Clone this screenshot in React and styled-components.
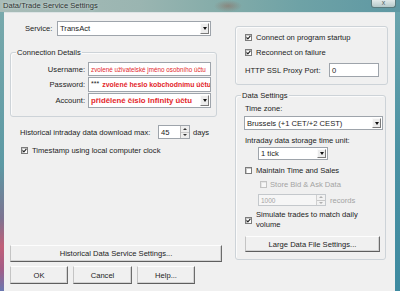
import React from 'react';
import styled, { createGlobalStyle } from 'styled-components';

const GlobalStyle = createGlobalStyle`
  html, body { margin: 0; padding: 0; background: #5f9aa4; }
  body { font-family: "Liberation Sans", Arial, sans-serif; overflow: hidden; }
  * { box-sizing: border-box; }
`;

const Window = styled.div`
  width: 400px;
  height: 291px;
  display: flex;
  flex-direction: column;
  overflow: hidden;
  background: #5f9aa4;
`;

const TitleBar = styled.div`
  height: 12px;
  flex: none;
  display: flex;
  align-items: flex-start;
  justify-content: space-between;
  padding: 0 3px 0 3px;
  background:
    radial-gradient(ellipse 14px 6px at 228px 6px, rgba(150, 70, 50, 0.35), transparent),
    linear-gradient(90deg, #a8bcb8 0%, #9ab5b1 35%, #84aca9 55%, #6ea2a6 75%, #5e98a3 100%);
`;

const Title = styled.span`
  font-size: 7.6px;
  line-height: 11px;
  color: #2d3433;
  text-shadow: 0 0 3px rgba(255, 255, 255, 0.7);
`;

const CloseButton = styled.div`
  width: 25px;
  height: 8px;
  margin-right: 1px;
  border: 1px solid #5a7b7e;
  border-top: none;
  border-radius: 0 0 3px 3px;
  background: linear-gradient(#e2eaea, #b5c9ca);
  font-size: 7px;
  line-height: 6px;
  text-align: center;
  color: #55686a;
`;

const FrameRow = styled.div`
  flex: 1;
  display: flex;
  min-height: 0;
`;

const SideFrame = styled.div`
  flex: none;
  width: ${p => p.$w}px;
  background: ${p => p.$bg};
`;

const Body = styled.div`
  flex: 1;
  display: flex;
  align-items: flex-start;
  background: #f0f0f0;
  border-top: 1px solid #dde4e5;
  color: #1c1c1c;
  font-size: 7.6px;
`;

const LeftCol = styled.div`
  flex: none;
  width: 218px;
  padding: 8px 0 0 6px;
  display: flex;
  flex-direction: column;
`;

const RightCol = styled.div`
  flex: none;
  width: 152px;
  margin-left: 13px;
  padding-top: 13px;
  display: flex;
  flex-direction: column;
`;

const ServiceRow = styled.div`
  display: flex;
  align-items: center;
  height: 15px;
  padding-left: 15px;
`;

const Label = styled.span`
  flex: none;
  width: ${p => (p.$w ? `${p.$w}px` : 'auto')};
  margin-left: ${p => p.$ml || 0}px;
  text-align: ${p => (p.$right ? 'right' : 'left')};
  padding-right: ${p => (p.$right ? '1px' : '0')};
  color: ${p => (p.$disabled ? '#a3a3a3' : 'inherit')};
  white-space: nowrap;
`;

const Combo = styled.div`
  flex: none;
  display: flex;
  align-items: stretch;
  width: ${p => p.$w}px;
  height: ${p => p.$h}px;
  margin-left: ${p => p.$ml || 0}px;
  border: 1px solid #9ea4ab;
  background: #fff;
  overflow: hidden;
`;

const ComboText = styled.span`
  flex: 1;
  padding-left: 2px;
  display: flex;
  align-items: center;
  white-space: nowrap;
  overflow: hidden;
  font-size: ${p => p.$fs || 7.6}px;
  font-weight: ${p => (p.$bold ? 700 : 400)};
  color: ${p => p.$color || '#1c1c1c'};
`;

const DropButton = styled.span`
  flex: none;
  width: 9px;
  margin: 1px;
  border: 1px solid;
  border-color: #fafafa #7a7a7a #7a7a7a #fafafa;
  background: #ececec;
  display: flex;
  align-items: center;
  justify-content: center;
  &::after {
    content: '';
    border-left: 2.5px solid transparent;
    border-right: 2.5px solid transparent;
    border-top: 3px solid #111;
  }
`;

const Group = styled.div`
  position: relative;
  flex: none;
  width: ${p => p.$w}px;
  height: ${p => p.$h}px;
  margin-top: ${p => p.$mt || 0}px;
  border: 1px solid #cdd3d8;
  border-radius: 3px;
  box-shadow: inset 1px 1px 0 #fbfbfb;
  padding: ${p => p.$pad};
  display: flex;
  flex-direction: column;
`;

const Caption = styled.span`
  position: absolute;
  left: ${p => p.$left}px;
  top: -5px;
  padding: 0 1px;
  background: #f0f0f0;
  line-height: 9px;
  white-space: nowrap;
`;

const FieldGrid = styled.div`
  display: grid;
  grid-template-columns: 75px 123px;
  grid-template-rows: 14px 15px 15px;
  column-gap: 2px;
  row-gap: 1px;
  align-items: center;
`;

const TextBox = styled.div`
  height: ${p => p.$h}px;
  width: ${p => (p.$w ? `${p.$w}px` : 'auto')};
  border: 1px solid #9ea4ab;
  background: #fff;
  display: flex;
  align-items: center;
  padding-left: 2px;
  white-space: nowrap;
  overflow: hidden;
  font-size: ${p => p.$fs || 7.6}px;
  font-weight: ${p => (p.$bold ? 700 : 400)};
  color: ${p => p.$color || '#1c1c1c'};
`;

const Stars = styled.span`
  color: #1c1c1c;
  font-weight: 400;
  font-size: 7px;
  margin-right: 3px;
  margin-top: -2px;
`;

const Row = styled.div`
  display: flex;
  align-items: center;
  height: ${p => p.$h}px;
  margin-top: ${p => p.$mt || 0}px;
  padding-left: ${p => p.$pl || 0}px;
  gap: ${p => p.$gap || 0}px;
`;

const Spin = styled.div`
  flex: none;
  display: flex;
  width: ${p => p.$w}px;
  height: ${p => p.$h}px;
  margin-left: ${p => p.$ml || 0}px;
  border: 1px solid ${p => (p.$disabled ? '#c4c8cc' : '#9ea4ab')};
  background: ${p => (p.$disabled ? '#f6f6f6' : '#fff')};
  color: ${p => (p.$disabled ? '#a3a3a3' : '#1c1c1c')};
  font-size: ${p => (p.$disabled ? 6.5 : 7.6)}px;
`;

const SpinText = styled.span`
  flex: 1;
  display: flex;
  align-items: center;
  padding-left: 2px;
`;

const SpinArrows = styled.span`
  flex: none;
  width: 9px;
  display: flex;
  flex-direction: column;
  border-left: 1px solid ${p => (p.$disabled ? '#d0d0d0' : '#b8b8b8')};
`;

const SpinArrow = styled.span`
  flex: 1;
  display: flex;
  align-items: center;
  justify-content: center;
  background: ${p => (p.$disabled ? '#f2f2f2' : '#eeeeee')};
  border-bottom: ${p => (p.$up ? '1px solid #c8c8c8' : 'none')};
  &::after {
    content: '';
    border-left: 2px solid transparent;
    border-right: 2px solid transparent;
    ${p => (p.$up ? 'border-bottom' : 'border-top')}: 2px solid ${p => (p.$disabled ? '#b0b0b0' : '#333')};
  }
`;

const CheckBox = styled.span`
  flex: none;
  width: 7px;
  height: 7px;
  border: 1px solid ${p => (p.$disabled ? '#c3c3c3' : '#7c7c7c')};
  background: ${p => (p.$disabled ? '#f7f7f7' : '#fff')};
  box-shadow: inset 1px 1px 0 ${p => (p.$disabled ? '#e6e6e6' : '#c9c9c9')};
  display: flex;
  align-items: center;
  justify-content: center;
`;

const CheckText = styled.span`
  color: ${p => (p.$disabled ? '#a3a3a3' : 'inherit')};
  width: ${p => (p.$w ? `${p.$w}px` : 'auto')};
  line-height: ${p => p.$lh || 9}px;
  white-space: ${p => (p.$w ? 'normal' : 'nowrap')};
`;

const Button = styled.button`
  flex: none;
  width: ${p => p.$w}px;
  height: ${p => p.$h}px;
  margin-top: ${p => p.$mt || 0}px;
  margin-left: ${p => p.$ml || 0}px;
  padding: 0;
  font-family: inherit;
  font-size: 7.6px;
  color: #1c1c1c;
  background: #f0f0f0;
  border: 1px solid;
  border-color: #fdfdfd #6c6c6c #5e5e5e #c4c4c4;
  box-shadow: inset -1px -1px 0 #d2d2d2;
`;

const ButtonRow = styled.div`
  display: flex;
  gap: 5px;
  margin-top: 4px;
`;

function Check({ checked, disabled }) {
  return (
    <CheckBox $disabled={disabled}>
      {checked && (
        <svg width="5" height="5" viewBox="0 0 5 5">
          <path d="M0.6 2.4 L1.9 3.8 L4.4 0.8" fill="none" stroke="#222" strokeWidth="1.1" />
        </svg>
      )}
    </CheckBox>
  );
}

function SpinBox({ value, w, h, ml, disabled }) {
  return (
    <Spin $w={w} $h={h} $ml={ml} $disabled={disabled}>
      <SpinText>{value}</SpinText>
      <SpinArrows $disabled={disabled}>
        <SpinArrow $up $disabled={disabled} />
        <SpinArrow $disabled={disabled} />
      </SpinArrows>
    </Spin>
  );
}

export default function App() {
  return (
    <>
      <GlobalStyle />
      <Window>
        <TitleBar>
          <Title>Data/Trade Service Settings</Title>
          <CloseButton>x</CloseButton>
        </TitleBar>
        <FrameRow>
          <SideFrame
            $w={4}
            $bg="linear-gradient(180deg, #78a9ac 0%, #5c99a4 55%, #7d7391 74%, #c15f78 84%, #a35c86 92%, #6a78b0 100%)"
          />
          <Body>
            <LeftCol>
              <ServiceRow>
                <Label $w={32}>Service:</Label>
                <Combo $w={154} $h={15}>
                  <ComboText>TransAct</ComboText>
                  <DropButton />
                </Combo>
              </ServiceRow>

              <Group $w={207} $h={65} $mt={16} $pad="9px 0 0 0">
                <Caption $left={5}>Connection Details</Caption>
                <FieldGrid>
                  <Label $right>Username:</Label>
                  <TextBox $h={14} $fs={6.3} $color="#e3262b">
                    zvolené uživatelské jméno osobního účtu
                  </TextBox>
                  <Label $right>Password:</Label>
                  <TextBox $h={15} $fs={6.9} $bold $color="#e3262b">
                    <Stars>***</Stars>zvolené heslo kobchodnímu účtu
                  </TextBox>
                  <Label $right>Account:</Label>
                  <Combo $w={123} $h={15}>
                    <ComboText $fs={7.8} $bold $color="#e3262b">přidělené číslo Infinity účtu</ComboText>
                    <DropButton />
                  </Combo>
                </FieldGrid>
              </Group>

              <Row $h={14} $mt={8} $pl={10}>
                <Label $w={138}>Historical intraday data download max:</Label>
                <SpinBox value="45" w={32} h={14} />
                <Label $ml={3}>days</Label>
              </Row>

              <Row $h={8} $mt={7} $pl={11} $gap={4}>
                <Check checked />
                <CheckText>Timestamp using local computer clock</CheckText>
              </Row>

              <Button $w={212} $h={17} $mt={91}>Historical Data Service Settings...</Button>

              <ButtonRow>
                <Button $w={58} $h={18}>OK</Button>
                <Button $w={59} $h={18}>Cancel</Button>
                <Button $w={58} $h={18}>Help...</Button>
              </ButtonRow>
            </LeftCol>

            <RightCol>
              <Group $w={153} $h={59} $pad="6px 0 0 9px">
                <Row $h={8} $gap={4}>
                  <Check checked />
                  <CheckText>Connect on program startup</CheckText>
                </Row>
                <Row $h={8} $mt={7} $gap={4}>
                  <Check checked />
                  <CheckText>Reconnect on failure</CheckText>
                </Row>
                <Row $h={14} $mt={7}>
                  <Label $w={84}>HTTP SSL Proxy Port:</Label>
                  <TextBox $h={14} $w={50}>0</TextBox>
                </Row>
              </Group>

              <Group $w={151} $h={165} $mt={10} $pad="8px 0 0 9px">
                <Caption $left={5}>Data Settings</Caption>
                <Row $h={9}>
                  <Label>Time zone:</Label>
                </Row>
                <Row $h={14} $mt={3}>
                  <Combo $w={139} $h={14} $ml={-1}>
                    <ComboText>Brussels (+1 CET/+2 CEST)</ComboText>
                    <DropButton />
                  </Combo>
                </Row>
                <Row $h={9} $mt={6}>
                  <Label>Intraday data storage time unit:</Label>
                </Row>
                <Row $h={13} $mt={2}>
                  <Combo $w={70} $h={13} $ml={13}>
                    <ComboText>1 tick</ComboText>
                    <DropButton />
                  </Combo>
                </Row>
                <Row $h={8} $mt={6} $gap={4}>
                  <Check />
                  <CheckText>Maintain Time and Sales</CheckText>
                </Row>
                <Row $h={8} $mt={6} $pl={15} $gap={3}>
                  <Check disabled />
                  <CheckText $disabled>Store Bid &amp; Ask Data</CheckText>
                </Row>
                <Row $h={12} $mt={6}>
                  <SpinBox value="1000" w={68} h={12} ml={13} disabled />
                  <Label $disabled $ml={4}>records</Label>
                </Row>
                <Row $h={20} $mt={4} $gap={4}>
                  <Check checked />
                  <CheckText $w={112} $lh={10}>Simulate trades to match daily volume</CheckText>
                </Row>
                <Button $w={135} $h={16} $mt={6}>Large Data File Settings...</Button>
              </Group>
            </RightCol>
          </Body>
          <SideFrame $w={5} $bg="linear-gradient(180deg, #6aa4ad 0%, #4b92a3 50%, #3e8aa0 100%)" />
        </FrameRow>
      </Window>
    </>
  );
}
